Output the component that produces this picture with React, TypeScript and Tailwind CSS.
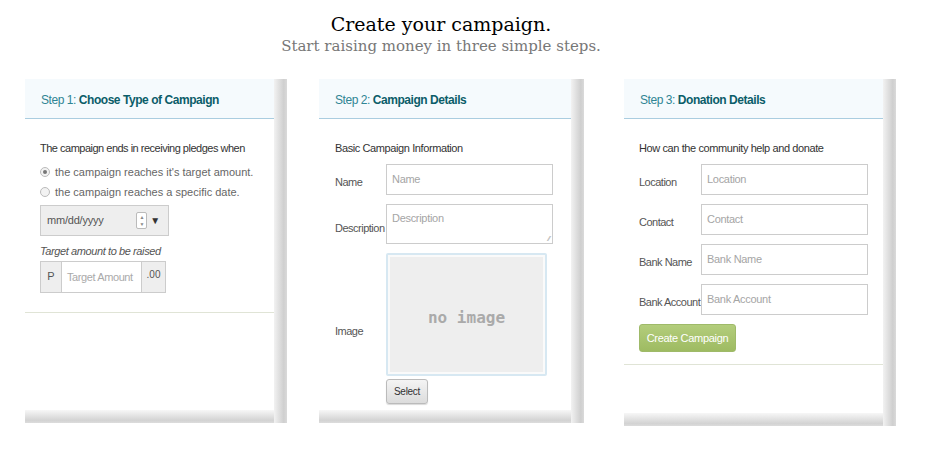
const body = { fontFamily: '"Liberation Sans", Arial, sans-serif' };

function Card({ width, step, title, children }: { width: string; step: string; title: string; children: React.ReactNode }) {
  return (
    <div className={`flex ${width}`}>
      <div className="flex min-w-0 flex-1 flex-col">
        <div className="h-[40px] whitespace-nowrap border-b border-[#aacde0] bg-[#f5fafd] px-[16px] pt-[12px] text-[12px] tracking-[-0.45px] text-[#2f8594]">
          {step} <span className="font-bold text-[#0b5d69]">{title}</span>
        </div>
        <div className="flex-1 bg-white">{children}</div>
        <div className="h-[13px] bg-[linear-gradient(to_bottom,#f7f7f7,#d3d3d3_80%,#dcdcdc)]" />
      </div>
      <div className="w-[13px] bg-[linear-gradient(to_right,#f2f2f2,#cfcfcf_75%,#dadada)]" />
    </div>
  );
}

function Field({ label, placeholder, labelW }: { label: string; placeholder: string; labelW: string }) {
  return (
    <div className="flex items-center">
      <div className={`${labelW} whitespace-nowrap pt-[6px] text-[11px] tracking-[-0.5px] text-[#555]`}>{label}</div>
      <div className="flex h-[31px] w-[167px] items-center whitespace-nowrap border border-[#cccccc] bg-white px-[5px] text-[11px] tracking-[-0.3px] text-[#a5a5a5]">
        {placeholder}
      </div>
    </div>
  );
}

export default function App() {
  return (
    <div className="h-[453px] w-[927px] bg-white" style={body}>
      <div className="pr-[45px] pt-[12px] text-center" style={{ fontFamily: '"DejaVu Serif", serif' }}>
        <div className="text-[19px] leading-[24px] text-black">Create your campaign.</div>
        <div className="text-[15px] leading-[20px] text-[#777]">Start raising money in three simple steps.</div>
      </div>

      <div className="mt-[23px] flex pl-[25px]">
        <Card width="w-[262px] h-[344px]" step="Step 1:" title="Choose Type of Campaign">
          <div className="whitespace-nowrap px-[15px] pt-[22px]">
            <div className="text-[11px] leading-[15px] tracking-[-0.5px] text-[#333]">The campaign ends in receiving pledges when</div>
            <div className="mt-[9px] flex h-[14px] items-center gap-[5px] text-[11px] text-[#666]">
              <span className="flex h-[10px] w-[10px] items-center justify-center rounded-full border border-[#bbb] bg-[#f2f2f2]">
                <span className="h-[4px] w-[4px] rounded-full bg-[#777]" />
              </span>
              the campaign reaches it's target amount.
            </div>
            <div className="mt-[6px] flex h-[14px] items-center gap-[5px] text-[11px] text-[#666]">
              <span className="h-[10px] w-[10px] rounded-full border border-[#bbb] bg-[#f2f2f2]" />
              the campaign reaches a specific date.
            </div>
            <div className="mt-[6px] flex h-[31px] w-[129px] items-center border border-[#cccccc] bg-[#eeeeee] pl-[6px] text-[11px] tracking-[-0.2px] text-[#555]">
              <span className="flex-1">mm/dd/yyyy</span>
              <span className="flex h-[17px] w-[11px] flex-col items-center justify-center rounded-[2px] border border-[#bbb] bg-white text-[5px] leading-[7px] text-[#888]">
                <span>▲</span>
                <span>▼</span>
              </span>
              <span className="ml-[3px] mr-[8px] text-[10px] text-[#333]">▼</span>
            </div>
            <div className="mt-[8px] text-[11px] italic leading-[14px] tracking-[-0.4px] text-[#555]">Target amount to be raised</div>
            <div className="mt-[3px] flex h-[32px] w-[126px] border border-[#cccccc] text-[11px]">
              <div className="w-[21px] border-r border-[#cccccc] bg-[#eeeeee] pt-[6px] text-center text-[#555]">P</div>
              <div className="flex flex-1 items-center bg-white pl-[5px] tracking-[-0.4px] text-[#aaa]">Target Amount</div>
              <div className="w-[24px] border-l border-[#cccccc] bg-[#eeeeee] pt-[5px] text-center text-[10px] text-[#555]">.00</div>
            </div>
          </div>
          <div className="mt-[19px] border-t border-[#e0e4d6]" />
        </Card>

        <div className="w-[32px]" />

        <Card width="w-[265px] h-[344px]" step="Step 2:" title="Campaign Details">
          <div className="px-[16px] pt-[22px]">
            <div className="text-[11px] leading-[15px] tracking-[-0.4px] text-[#333]">Basic Campaign Information</div>
            <div className="mt-[8px] flex flex-col gap-[9px]">
              <Field label="Name" placeholder="Name" labelW="w-[51px]" />
              <div className="flex items-center">
                <div className="w-[51px] whitespace-nowrap pt-[8px] text-[11px] tracking-[-0.5px] text-[#555]">Description</div>
                <div className="relative h-[40px] w-[167px] border border-[#cccccc] bg-white px-[5px] pt-[5px] text-[11px] tracking-[-0.3px] text-[#a5a5a5]">
                  Description
                  <span className="absolute bottom-[1px] right-[2px] text-[7px] leading-[7px] text-[#999]">⁄⁄</span>
                </div>
              </div>
              <div className="flex items-center">
                <div className="w-[51px] pt-[34px] text-[11px] tracking-[-0.5px] text-[#555]">Image</div>
                <div className="flex h-[123px] w-[161px] items-center justify-center rounded-[2px] border-[2px] border-[#d7e8f2] bg-[#eeeeee] pt-[6px] shadow-[inset_0_0_0_2px_#fafafa]">
                  <span className="text-[16px] font-bold text-[#aaaaaa]" style={{ fontFamily: '"DejaVu Sans Mono", monospace' }}>
                    no image
                  </span>
                </div>
              </div>
            </div>
            <div className="ml-[51px] mt-[3px] flex h-[25px] w-[42px] items-center justify-center rounded-[3px] border border-[#bbbbbb] bg-[linear-gradient(to_bottom,#f4f4f4,#dcdcdc)] text-[10px] tracking-[-0.3px] text-[#333] shadow-[0_1px_1px_rgba(0,0,0,0.15)]">
              Select
            </div>
          </div>
        </Card>

        <div className="w-[40px]" />

        <Card width="w-[272px] h-[347px]" step="Step 3:" title="Donation Details">
          <div className="px-[15px] pt-[22px]">
            <div className="text-[11px] leading-[15px] tracking-[-0.4px] text-[#333]">How can the community help and donate</div>
            <div className="mt-[8px] flex flex-col gap-[9px]">
              <Field label="Location" placeholder="Location" labelW="w-[62px]" />
              <Field label="Contact" placeholder="Contact" labelW="w-[62px]" />
              <Field label="Bank Name" placeholder="Bank Name" labelW="w-[62px]" />
              <Field label="Bank Account" placeholder="Bank Account" labelW="w-[62px]" />
            </div>
            <div className="mt-[9px] flex h-[28px] w-[97px] items-center justify-center whitespace-nowrap rounded-[3px] border border-[#9fba69] bg-[linear-gradient(to_bottom,#b3cd7c,#9ebb62)] text-[11px] tracking-[-0.3px] text-white">
              Create Campaign
            </div>
          </div>
          <div className="mt-[12px] border-t border-[#e0e4d6]" />
        </Card>
      </div>
    </div>
  );
}
